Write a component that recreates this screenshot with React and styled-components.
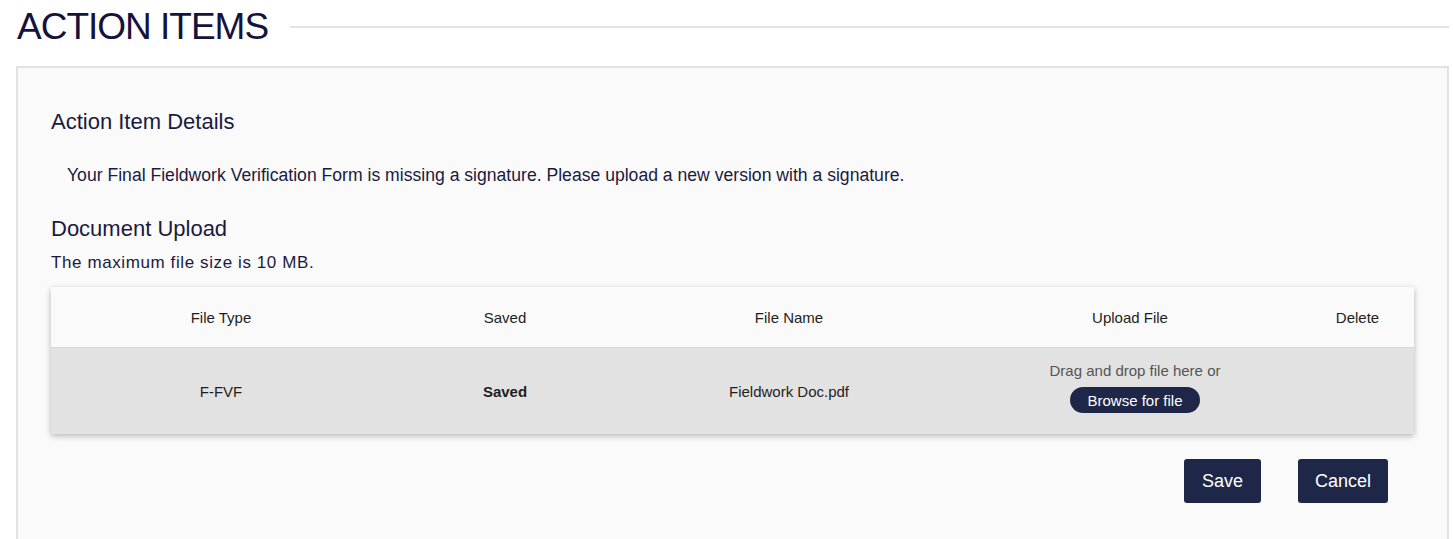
import React from 'react';
import styled, { createGlobalStyle } from 'styled-components';

const GlobalStyle = createGlobalStyle`
  body {
    margin: 0;
    background: #ffffff;
    font-family: "Liberation Sans", Arial, Helvetica, sans-serif;
  }
`;

const Page = styled.div`
  padding: 5px 4px 0 16px;
`;

const Header = styled.div`
  display: flex;
  align-items: center;
`;

const PageTitle = styled.h1`
  margin: 0 22px 0 1px;
  font-size: 37px;
  font-weight: 400;
  letter-spacing: -1px;
  line-height: 44px;
  color: #15133c;
  white-space: nowrap;
`;

const Rule = styled.div`
  flex: 1;
  height: 2px;
  background: #e4e4e4;
`;

const Panel = styled.div`
  margin-top: 17px;
  border: 2px solid #e2e2e2;
  background: #fafafa;
  padding: 40px 33px 40px 33px;
`;

const SectionTitle = styled.h2`
  margin: ${(p) => p.$top || 0}px 0 0;
  font-size: 22px;
  font-weight: 400;
  line-height: 28px;
  color: #1a1a40;
`;

const Message = styled.p`
  margin: 28px 0 0 16px;
  font-size: 17.6px;
  line-height: 22px;
  color: #1a1a40;
`;

const Note = styled.p`
  margin: 9px 0 0;
  font-size: 17px;
  letter-spacing: 0.6px;
  line-height: 22px;
  color: #1a1a40;
`;

const Table = styled.div`
  margin-top: 13px;
  background: #fafafa;
  box-shadow: 0 2px 6px rgba(0, 0, 0, 0.28);
`;

const Row = styled.div`
  display: grid;
  grid-template-columns: 340px 228px 340px 342px 1fr;
  align-items: center;
  height: ${(p) => p.$height}px;
  background: ${(p) => p.$bg};
  border-top: ${(p) => (p.$divider ? '1px solid #d9d9d9' : 'none')};
`;

const Cell = styled.div`
  text-align: center;
  font-size: 15px;
  color: #1e1e1e;
  font-weight: ${(p) => (p.$bold ? 700 : 400)};
`;

const DropZone = styled.div`
  display: flex;
  flex-direction: column;
  align-items: center;
  gap: 8px;
  padding: 0 0 7px 10px;
`;

const DropHint = styled.span`
  font-size: 15px;
  color: #555555;
`;

const BrowseButton = styled.button`
  height: 26px;
  padding: 0 17px;
  border: none;
  border-radius: 13px;
  background: #1f2748;
  color: #ffffff;
  font-family: inherit;
  font-size: 15px;
  cursor: pointer;
`;

const Actions = styled.div`
  display: flex;
  justify-content: flex-end;
  gap: 37px;
  margin-top: 25px;
  padding-right: 26px;
`;

const ActionButton = styled.button`
  height: 44px;
  padding: 0 ${(p) => p.$pad}px;
  border: none;
  border-radius: 3px;
  background: #1f2748;
  color: #ffffff;
  font-family: inherit;
  font-size: 18px;
  cursor: pointer;
`;

const App = () => {
  return (
    <>
      <GlobalStyle />
      <Page>
        <Header>
          <PageTitle>ACTION ITEMS</PageTitle>
          <Rule />
        </Header>

        <Panel>
          <SectionTitle>Action Item Details</SectionTitle>
          <Message>
            Your Final Fieldwork Verification Form is missing a signature. Please upload a new
            version with a signature.
          </Message>

          <SectionTitle $top={29}>Document Upload</SectionTitle>
          <Note>The maximum file size is 10 MB.</Note>

          <Table>
            <Row $height={60} $bg="#fafafa">
              <Cell>File Type</Cell>
              <Cell>Saved</Cell>
              <Cell>File Name</Cell>
              <Cell>Upload File</Cell>
              <Cell>Delete</Cell>
            </Row>
            <Row $height={86} $bg="#e2e2e2" $divider>
              <Cell>F-FVF</Cell>
              <Cell $bold>Saved</Cell>
              <Cell>Fieldwork Doc.pdf</Cell>
              <DropZone>
                <DropHint>Drag and drop file here or</DropHint>
                <BrowseButton>Browse for file</BrowseButton>
              </DropZone>
              <Cell />
            </Row>
          </Table>

          <Actions>
            <ActionButton $pad={18}>Save</ActionButton>
            <ActionButton $pad={17}>Cancel</ActionButton>
          </Actions>
        </Panel>
      </Page>
    </>
  );
};

export default App;
